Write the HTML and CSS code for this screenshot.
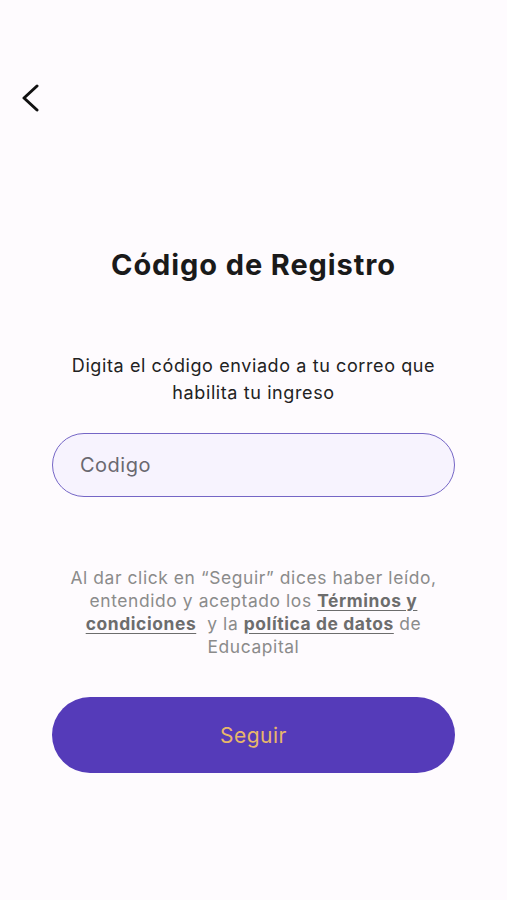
FILE: index.html
```html
<!DOCTYPE html>
<html lang="es">
<head>
    <meta charset="UTF-8">
    <meta name="viewport" content="width=device-width, initial-scale=1.0">
    <title>Código de Registro</title>
    <link rel="stylesheet" href="styles.css">
</head>
<body>
    <div class="screen">
        <div class="top-bar">
            <button class="back-btn" aria-label="Volver">
                <svg width="20" height="28" viewBox="0 0 20 28">
                    <path d="M17 2 L4 14 L17 26" fill="none" stroke="#111" stroke-width="3" stroke-linecap="round" stroke-linejoin="round"/>
                </svg>
            </button>
        </div>

        <h1 class="title">Código de Registro</h1>
        <p class="subtitle">Digita el código enviado a tu correo que habilita tu ingreso</p>

        <input class="code-input" type="text" placeholder="Codigo">

        <p class="terms">Al dar click en “Seguir” dices haber leído, entendido y aceptado los <a href="#">Términos y condiciones</a>&nbsp; y la <a href="#">política de datos</a> de Educapital</p>

        <button class="primary-btn">Seguir</button>
    </div>
</body>
</html>
```

FILE: styles.css
```css
html, body {
    margin: 0;
    padding: 0;
}
body {
    background: #fefbfe;
    font-family: Inter, "Noto Sans", Arial, sans-serif;
    color: #1c1b1f;
}
.screen {
    display: flex;
    flex-direction: column;
    align-items: center;
    padding: 0 52px;
    min-height: 900px;
}
.top-bar {
    align-self: stretch;
    margin: 0 -52px;
    padding: 84px 0 0 20px;
    height: 30px;
}
.back-btn {
    background: none;
    border: none;
    padding: 0;
    cursor: pointer;
}
.title {
    margin: 134px 0 0;
    font-size: 29px;
    font-weight: 700;
    letter-spacing: 0.9px;
    color: #1a1a1a;
    line-height: 34px;
}
.subtitle {
    margin: 70px 0 0;
    padding: 0 12px;
    font-size: 18px;
    line-height: 27px;
    letter-spacing: 0.6px;
    text-align: center;
    color: #222;
}
.code-input {
    box-sizing: border-box;
    width: 100%;
    height: 64px;
    margin-top: 27px;
    padding: 0 27px;
    border: 1.5px solid #7566c6;
    border-radius: 32px;
    background: #f7f3fe;
    font-family: inherit;
    font-size: 20px;
    letter-spacing: 0.5px;
    color: #333;
    outline: none;
}
.code-input::placeholder {
    color: #6a6870;
}
.terms {
    margin: 69px 0 0;
    padding: 0 10px;
    font-size: 17.4px;
    line-height: 23px;
    letter-spacing: 0.6px;
    text-align: center;
    color: #8b8b8b;
}
.terms a {
    color: #6d6d6d;
    font-weight: 700;
    text-decoration: underline;
    text-underline-offset: 3px;
}
.primary-btn {
    width: 100%;
    height: 76px;
    margin-top: 39px;
    border: none;
    border-radius: 38px;
    background: #553bb9;
    color: #e8b76a;
    font-family: inherit;
    font-size: 21px;
    letter-spacing: 0.5px;
    cursor: pointer;
}
```
